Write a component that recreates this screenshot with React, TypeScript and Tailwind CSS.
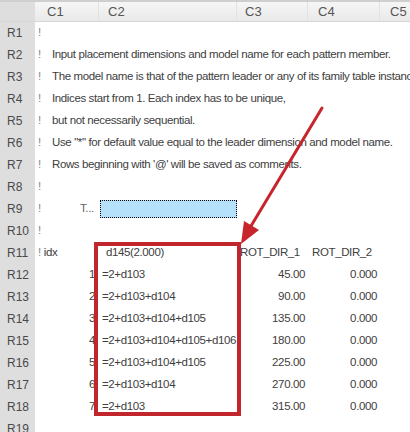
import React from "react";

/* Pattern table editor — spreadsheet grid with a red callout over the C2 column. */

const FONT = { fontFamily: '"Liberation Sans", Arial, sans-serif' };

const comments: Record<number, string> = {
  1: "",
  2: "Input placement dimensions and model name for each pattern member.",
  3: "The model name is that of the pattern leader or any of its family table instance.",
  4: "Indices start from 1. Each index has to be unique,",
  5: "but not necessarily sequential.",
  6: 'Use "*" for default value equal to the leader dimension and model name.',
  7: "Rows beginning with '@' will be saved as comments.",
  8: "",
  10: "",
};

const data = [
  { idx: "1", f: "=2+d103", r1: "45.00", r2: "0.000" },
  { idx: "2", f: "=2+d103+d104", r1: "90.00", r2: "0.000" },
  { idx: "3", f: "=2+d103+d104+d105", r1: "135.00", r2: "0.000" },
  { idx: "4", f: "=2+d103+d104+d105+d106", r1: "180.00", r2: "0.000" },
  { idx: "5", f: "=2+d103+d104+d105", r1: "225.00", r2: "0.000" },
  { idx: "6", f: "=2+d103+d104", r1: "270.00", r2: "0.000" },
  { idx: "7", f: "=2+d103", r1: "315.00", r2: "0.000" },
];

function RowHead({ n }: { n: number }) {
  return (
    <div className="flex w-[35px] shrink-0 items-center bg-[#dedede] pl-[7px] text-[12px] tracking-normal text-[#4a4a4a]">
      R{n}
    </div>
  );
}

function CommentRow({ n, text }: { n: number; text: string }) {
  return (
    <div className="flex h-[22px]">
      <RowHead n={n} />
      <div className="flex items-center whitespace-nowrap pl-[3px]">
        <span className="inline-block w-[14px] text-[#888]">!</span>
        <span>{text}</span>
      </div>
    </div>
  );
}

export default function App() {
  const rows: React.ReactNode[] = [];
  for (let n = 1; n <= 10; n++) {
    if (n === 9) {
      rows.push(
        <div key={n} className="flex h-[22px]">
          <RowHead n={9} />
          <div className="flex w-[64px] items-center pl-[3px]">
            <span className="inline-block w-[42px] text-[#888]">!</span>
            <span className="text-[#666]">T...</span>
          </div>
          <div className="my-[2px] ml-[1px] w-[137px] border border-dotted border-black bg-[#b5e1fb]" />
        </div>,
      );
    } else {
      rows.push(<CommentRow key={n} n={n} text={comments[n]} />);
    }
  }

  return (
    <div
      className="relative h-[432px] w-[410px] overflow-hidden bg-white text-[11.5px] tracking-[-0.38px] text-[#404040]"
      style={FONT}
    >
      {/* column header */}
      <div className="flex h-[22px] border-t-2 border-b border-t-[#cfcfcf] border-b-[#d6d6d6] text-[13px] tracking-normal text-[#555]">
        <div className="w-[35px] shrink-0 bg-[#dedede]" />
        <div className="flex w-[64px] items-center border-r border-[#e2e2e2] bg-gradient-to-b from-[#f6f6f6] to-[#e9e9e9] pl-[12px]">C1</div>
        <div className="flex w-[138px] items-center border-r border-[#e2e2e2] bg-gradient-to-b from-[#f6f6f6] to-[#e9e9e9] pl-[9px]">C2</div>
        <div className="flex w-[71px] items-center border-r border-[#e2e2e2] bg-gradient-to-b from-[#f6f6f6] to-[#e9e9e9] pl-[8px]">C3</div>
        <div className="flex w-[72px] items-center border-r border-[#e2e2e2] bg-gradient-to-b from-[#f6f6f6] to-[#e9e9e9] pl-[10px]">C4</div>
        <div className="flex flex-1 items-center bg-gradient-to-b from-[#f6f6f6] to-[#e9e9e9] pl-[10px]">C5</div>
      </div>

      {rows}

      {/* R11 column titles */}
      <div className="flex h-[22px]">
        <RowHead n={11} />
        <div className="flex w-[64px] items-center pl-[3px]">
          <span className="text-[#888]">!</span>
          <span className="ml-[3px]">idx</span>
        </div>
        <div className="flex w-[138px] items-center pl-[7px]">d145(2.000)</div>
        <div className="flex w-[71px] items-center pl-[3px]">ROT_DIR_1</div>
        <div className="flex w-[72px] items-center pl-[4px]">ROT_DIR_2</div>
      </div>

      {data.map((d, i) => (
        <div key={d.idx} className="flex h-[22px]">
          <RowHead n={12 + i} />
          <div className="flex w-[64px] items-center justify-end pr-[4px]">{d.idx}</div>
          <div className="flex w-[138px] items-center pl-[3px]">{d.f}</div>
          <div className="flex w-[71px] items-center justify-end pr-[3px]">{d.r1}</div>
          <div className="flex w-[72px] items-center justify-end pr-[3px]">{d.r2}</div>
        </div>
      ))}

      <div className="flex h-[22px]">
        <RowHead n={19} />
      </div>

      {/* red callout box */}
      <div className="absolute left-[94px] top-[242px] h-[174px] w-[147px] border-[4px] border-[#c0262c]" />

      {/* red arrow */}
      <svg className="absolute left-0 top-0" width="410" height="432" viewBox="0 0 410 432">
        <line x1="322" y1="108" x2="251" y2="226" stroke="#c8242b" strokeWidth="3" strokeLinecap="round" />
        <polygon points="241,244 244,221 259,230" fill="#c8242b" />
      </svg>
    </div>
  );
}
